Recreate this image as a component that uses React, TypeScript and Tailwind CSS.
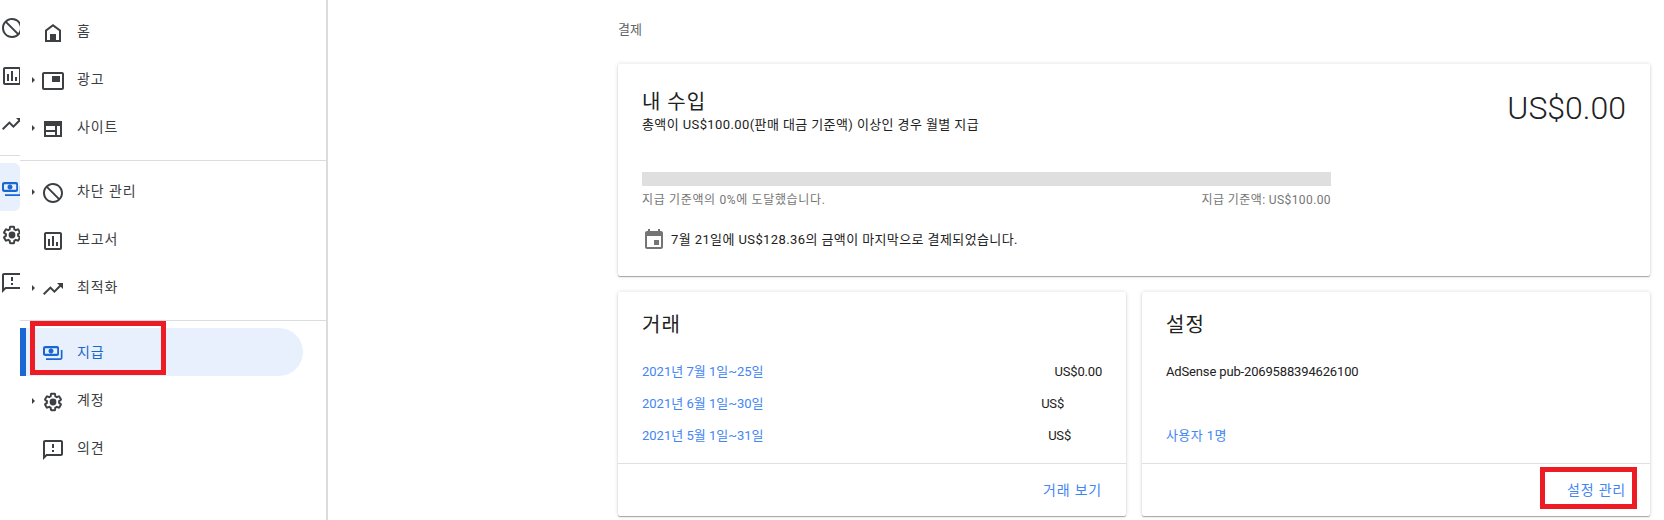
import React from "react";

const INK = "#3c4043";
const P = {
  home: <><path fillRule="evenodd" d="M12 3L4 9v12h16V9l-8-6zm6 16h-3v-6H9v6H6v-9l6-4.5 6 4.5v9z" /><path d="M9 13h6v6H9z" /></>,
  ad: <path d="M19 7h-8v6h8V7zm2-4H3c-1.1 0-2 .9-2 2v14c0 1.1.9 2 2 2h18c1.1 0 2-.9 2-2V5c0-1.1-.9-2-2-2zm0 16.01H3V4.98h18v14.03z" />,
  site: <path fillRule="evenodd" d="M3 4h18v16H3zM5 9h9v4H5zM5 15h9v3H5zM16 9h3v9h-3z" />,
  block: <path transform="matrix(-1 0 0 1 24 0)" d="M12 2C6.48 2 2 6.48 2 12s4.48 10 10 10 10-4.48 10-10S17.52 2 12 2zM4 12c0-4.42 3.58-8 8-8 1.85 0 3.55.63 4.9 1.69L5.69 16.9C4.63 15.55 4 13.85 4 12zm8 8c-1.85 0-3.55-.63-4.9-1.69L18.31 7.1C19.37 8.45 20 10.15 20 12c0 4.42-3.58 8-8 8z" />,
  chart: <path d="M9 17H7v-7h2v7zm4 0h-2V7h2v10zm4 0h-2v-4h2v4zm2 2H5V5h14v14zm0-16H5c-1.1 0-2 .9-2 2v14c0 1.1.9 2 2 2h14c1.1 0 2-.9 2-2V5c0-1.1-.9-2-2-2z" />,
  trend: <path d="M16 6l2.29 2.29-4.88 4.88-4-4L2 16.59 3.41 18l6-6 4 4 6.3-6.29L22 12V6z" />,
  pay: <><path fillRule="evenodd" d="M4.5 4h11.5C17.3 4 18 4.9 18 6v6c0 1.1-.7 2-2 2H4.5C3 14 2 13.1 2 12V6c0-1.1 1-2 2.5-2zM5 6.2c-.8 0-1 .4-1 .9v3.8c0 .5.2.9 1 .9h10.5c.5 0 .7-.4.7-.9V7.1c0-.5-.2-.9-.7-.9H5zm5 .3c1.4 0 2.5 1.1 2.5 2.5S11.4 11.5 10 11.5 7.5 10.4 7.5 9 8.6 6.5 10 6.5z" /><path d="M19.8 8H21.5v7.8c0 1.3-.9 2.2-2.2 2.2H5v-1.7h14.8z" /></>,
  gear: <><path fill="none" stroke="currentColor" strokeWidth="2.3" transform="translate(1.8 1.8) scale(.85)" d="M19.14 12.94c.04-.3.06-.61.06-.94 0-.32-.02-.64-.07-.94l2.03-1.58c.18-.14.23-.41.12-.61l-1.92-3.32c-.12-.22-.37-.29-.59-.22l-2.39.96c-.5-.38-1.03-.7-1.62-.94l-.36-2.54c-.04-.24-.24-.41-.48-.41h-3.84c-.24 0-.43.17-.47.41l-.36 2.54c-.59.24-1.13.57-1.62.94l-2.39-.96c-.22-.08-.47 0-.59.22L2.74 8.87c-.12.21-.08.47.12.61l2.03 1.58c-.05.3-.09.63-.09.94s.02.64.07.94l-2.03 1.58c-.18.14-.23.41-.12.61l1.92 3.32c.12.22.37.29.59.22l2.39-.96c.5.38 1.03.7 1.62.94l.36 2.54c.05.24.24.41.48.41h3.84c.24 0 .44-.17.47-.41l.36-2.54c.59-.24 1.13-.56 1.62-.94l2.39.96c.22.08.47 0 .59-.22l1.92-3.32c.12-.22.07-.47-.12-.61l-2.01-1.58z" /><circle cx="12" cy="12" r="3.4" /></>,
  feedback: <path d="M20 2H4c-1.1 0-1.99.9-1.99 2L2 22l4-4h14c1.1 0 2-.9 2-2V4c0-1.1-.9-2-2-2zm0 14H5.17L4 17.17V4h16v12zM11 12h2v2h-2zm0-6h2v4h-2z" />,
  event: <path d="M17 12h-5v5h5v-5zM16 1v2H8V1H6v2H5c-1.11 0-1.99.9-1.99 2L3 19c0 1.1.89 2 2 2h14c1.1 0 2-.9 2-2V5c0-1.1-.9-2-2-2h-1V1h-2zm3 18H5V8h14v11z" />,
};

function Icon({ name, className = "" }: { name: keyof typeof P; className?: string }) {
  return (
    <svg viewBox="0 0 24 24" width="24" height="24" fill="currentColor" className={`shrink-0 ${className}`}>
      {P[name]}
    </svg>
  );
}

function NavRow({ icon, label, caret, active }: { icon: keyof typeof P; label: string; caret?: boolean; active?: boolean }) {
  return (
    <div className={`flex h-12 w-[283px] items-center rounded-r-[24px] ${active ? "bg-[#e8f0fe] text-[#1967d2]" : "text-[#3c4043]"}`}>
      <div className={`h-12 w-[6px] shrink-0 ${active ? "bg-[#1967d2]" : ""}`} />
      <div className="flex w-[15px] shrink-0 pl-[6px] pt-[2px]">
        {caret && (
          <svg viewBox="0 0 3 6" width="3" height="6" fill={INK}>
            <path d="M0 0l3 3-3 3z" />
          </svg>
        )}
      </div>
      <Icon name={icon} className="relative top-[2px]" />
      <span className="ml-3 text-sm tracking-[0.9px]">{label}</span>
    </div>
  );
}

function Strip() {
  const rows: (keyof typeof P)[] = ["block", "chart", "trend"];
  const rows2: (keyof typeof P)[] = ["gear", "feedback"];
  return (
    <div className="w-5 shrink-0 overflow-hidden pt-[4px] text-[#3c4043]">
      {rows.map((n) => (
        <div key={n} className="flex h-12 w-5 items-center">
          <Icon name={n} />
        </div>
      ))}
      <div className="mt-[7px] h-px bg-[#dadce0]" />
      <div className="mt-[7px] flex h-12 w-5 items-center overflow-hidden rounded-r-[6px] bg-[#e8f0fe] text-[#1967d2]">
        <Icon name="pay" className="relative top-[3px]" />
      </div>
      {rows2.map((n) => (
        <div key={n} className="flex h-12 w-5 items-center">
          <Icon name={n} />
        </div>
      ))}
    </div>
  );
}

function Card({ children, className = "" }: { children: React.ReactNode; className?: string }) {
  return (
    <div className={`rounded-[2px] bg-white shadow-[0_1px_1px_rgba(0,0,0,0.32),0_0_4px_rgba(0,0,0,0.14)] ${className}`}>{children}</div>
  );
}

function MiniCard({ title, footer, children, boxed }: { title: string; footer: string; children: React.ReactNode; boxed?: boolean }) {
  return (
    <Card className="flex h-[224px] min-w-0 flex-1 flex-col">
      <div className="flex-1 px-6 pt-[19px]">
        <h2 className="text-xl font-normal leading-7 tracking-[1px] text-[#212121]">{title}</h2>
        <div className="mt-[17px]">{children}</div>
      </div>
      <div className="h-px bg-[#e0e0e0]" />
      <div className="relative flex h-[52px] items-center justify-end pr-6 text-sm tracking-[0.8px] text-[#4285f4]">
        {footer}
        {boxed && <div className="absolute right-[13px] top-[3px] h-[42px] w-[97px] border-[5px] border-[#ed1c24]" />}
      </div>
    </Card>
  );
}

function Tx({ label, amount, pr }: { label: string; amount: string; pr: string }) {
  return (
    <div className="flex h-8 items-center justify-between text-[13px]">
      <span className="text-[#4285f4]">{label}</span>
      <span className={`tracking-[-0.2px] text-[#212121] ${pr}`}>{amount}</span>
    </div>
  );
}

export default function App() {
  return (
    <div
      className="flex h-[520px] w-[1664px] overflow-hidden bg-white"
      style={{ fontFamily: 'Roboto, "Noto Sans CJK KR", sans-serif' }}
    >
      <Strip />
      <aside className="relative h-full w-[308px] shrink-0 border-r-2 border-[#dadce0] pt-[7px]">
        <NavRow icon="home" label="홈" />
        <NavRow icon="ad" label="광고" caret />
        <NavRow icon="site" label="사이트" caret />
        <div className="mb-[6px] mt-[9px] h-px bg-[#dadce0]" />
        <NavRow icon="block" label="차단 관리" caret />
        <NavRow icon="chart" label="보고서" />
        <NavRow icon="trend" label="최적화" caret />
        <div className="mb-[7px] mt-[9px] h-px bg-[#dadce0]" />
        <NavRow icon="pay" label="지급" active />
        <NavRow icon="gear" label="계정" caret />
        <NavRow icon="feedback" label="의견" />
        <div className="absolute left-[10px] top-[321px] h-[54px] w-[136px] border-[5px] border-[#ed1c24]" />
      </aside>
      <main className="min-w-0 flex-1 pl-[290px] pr-[14px]">
        <div className="flex h-[64px] items-center pb-[4px] text-[13px] text-[#5f6368]">결제</div>
        <Card className="flex h-[212px] px-6 pt-[24px]">
          <div className="w-[689px] shrink-0">
            <h1 className="text-xl font-normal leading-7 tracking-[1px] text-[#212121]">내 수입</h1>
            <p className="text-[13px] leading-[18px] tracking-[0.4px] text-[#212121]">총액이 US$100.00(판매 대금 기준액) 이상인 경우 월별 지급</p>
            <div className="mt-[38px] h-[14px] bg-[#dfdfdf]" />
            <div className="mt-[6px] flex justify-between text-xs leading-4 text-[#757575]">
              <span className="tracking-[0.65px]">지급 기준액의 0%에 도달했습니다.</span>
              <span className="tracking-[0.4px]">지급 기준액: US$100.00</span>
            </div>
            <div className="mt-[20px] flex items-center gap-[5px] text-[13px] tracking-[0.4px] text-[#212121]">
              <Icon name="event" className="text-[#757575]" />
              <span>7월 21일에 US$128.36의 금액이 마지막으로 결제되었습니다.</span>
            </div>
          </div>
          <div className="-mt-[2px] ml-auto text-[32px] font-light leading-[44px] text-[#212121]">US$0.00</div>
        </Card>
        <div className="mt-4 flex gap-4">
          <MiniCard title="거래" footer="거래 보기">
            <Tx label="2021년 7월 1일~25일" amount="US$0.00" pr="" />
            <Tx label="2021년 6월 1일~30일" amount="US$" pr="pr-[38px]" />
            <Tx label="2021년 5월 1일~31일" amount="US$" pr="pr-[31px]" />
          </MiniCard>
          <MiniCard title="설정" footer="설정 관리" boxed>
            <div className="flex h-8 items-center text-[13px] tracking-[-0.15px] text-[#212121]">AdSense pub-2069588394626100</div>
            <div className="h-8" />
            <div className="flex h-8 items-center text-[13px] tracking-[0.4px] text-[#4285f4]">사용자 1명</div>
          </MiniCard>
        </div>
      </main>
    </div>
  );
}
